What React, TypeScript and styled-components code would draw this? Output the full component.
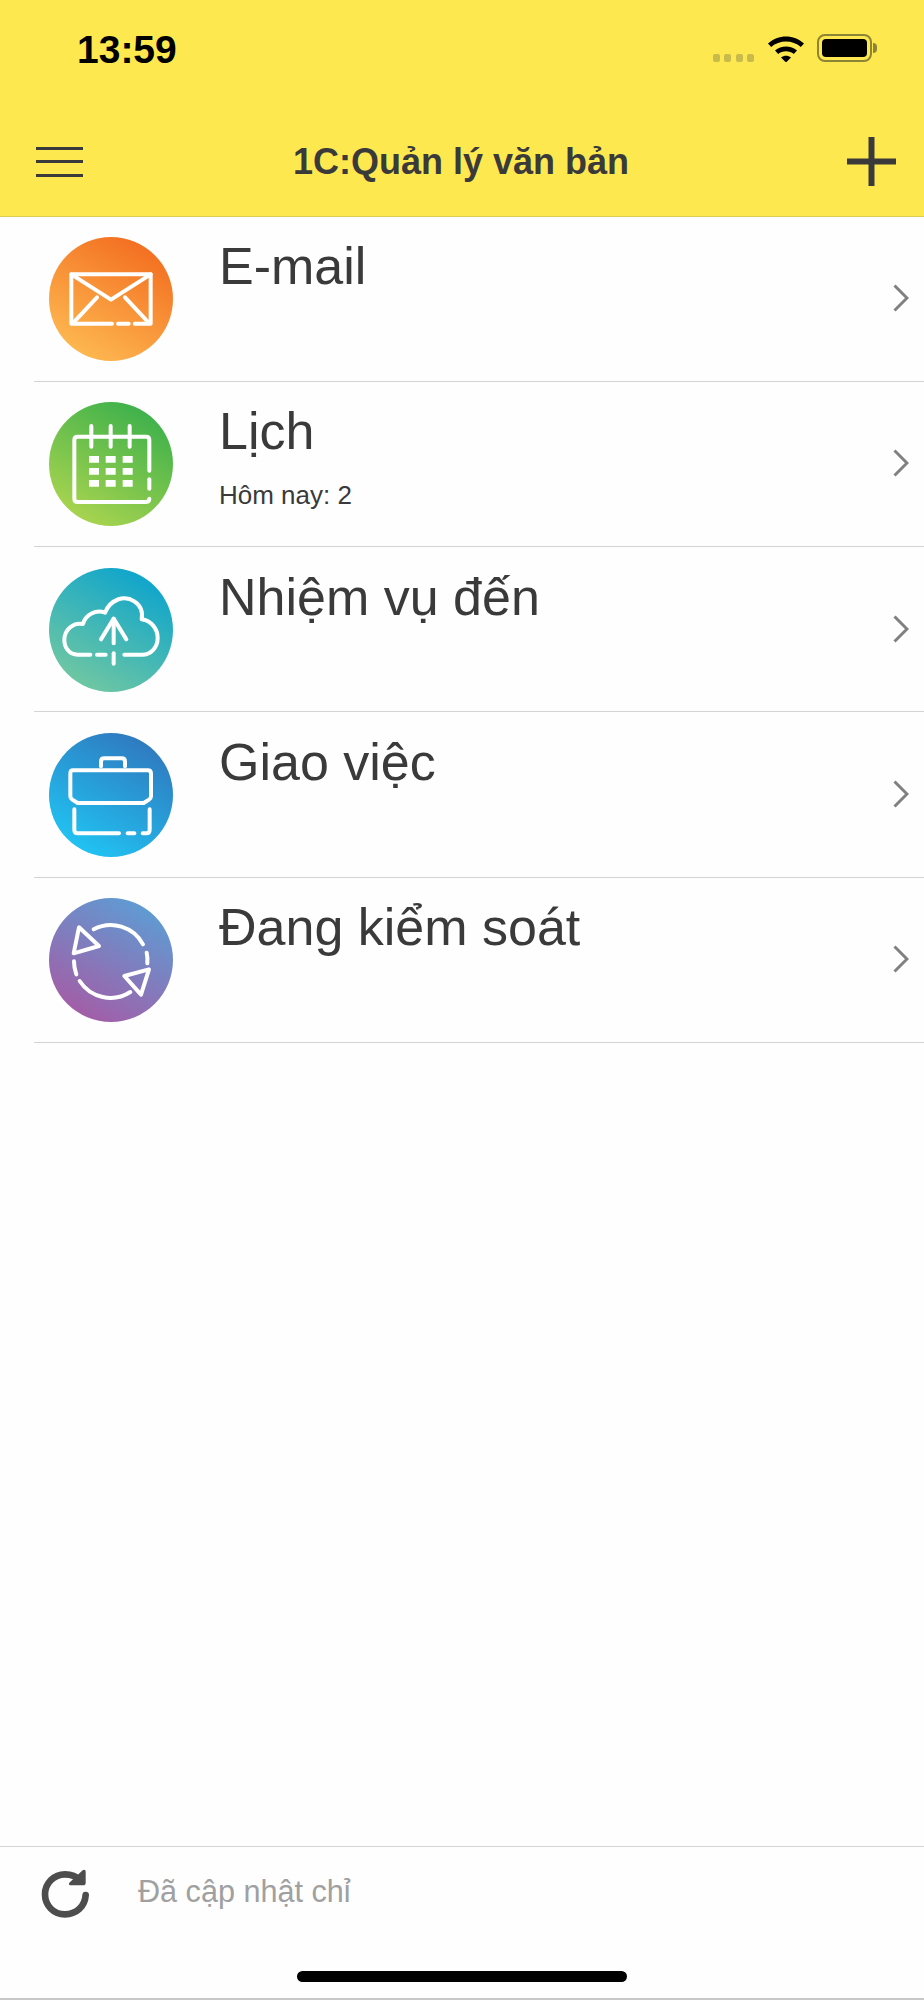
import React from 'react';
import styled, { createGlobalStyle } from 'styled-components';

const GlobalStyle = createGlobalStyle`
  html, body {
    margin: 0;
    padding: 0;
    background: #fff;
  }
  * {
    box-sizing: border-box;
  }
`;

const Screen = styled.div`
  width: 924px;
  height: 2000px;
  display: flex;
  flex-direction: column;
  background: #fefefe;
  font-family: 'Liberation Sans', Arial, sans-serif;
  color: #3a3a3a;
  overflow: hidden;
`;

const Top = styled.header`
  height: 216.5px;
  flex: none;
  display: flex;
  flex-direction: column;
  background: #fee84f;
  border-bottom: 1px solid #d9cd55;
`;

const StatusBar = styled.div`
  height: 100px;
  display: flex;
  justify-content: space-between;
  padding: 27px 52px 0 77px;
`;

const Time = styled.div`
  font-size: 39px;
  line-height: 45px;
  font-weight: 700;
  color: #000;
`;

const StatusIcons = styled.div`
  display: flex;
  align-items: flex-start;
  padding-top: 7px;
`;

const Dots = styled.div`
  display: flex;
  gap: 4.5px;
  margin: 20px 13px 0 0;
`;

const Dot = styled.span`
  width: 7px;
  height: 8px;
  border-radius: 2px;
  background: #c9bb4b;
`;

const Wifi = styled.svg`
  width: 38px;
  height: 28px;
  margin: 0 12px 0 0;
`;

const Battery = styled.div`
  position: relative;
  width: 55px;
  height: 28px;
  padding: 3px;
  border: 2px solid #8d8435;
  border-radius: 8px;
  &::after {
    content: '';
    position: absolute;
    right: -7px;
    top: 7px;
    width: 4px;
    height: 10px;
    border-radius: 0 4px 4px 0;
    background: #8d8435;
  }
`;

const BatteryLevel = styled.div`
  height: 100%;
  border-radius: 4px;
  background: #000;
`;

const NavBar = styled.div`
  height: 115.5px;
  display: flex;
  align-items: center;
  justify-content: space-between;
  padding: 8px 28px 0 36px;
`;

const Burger = styled.div`
  width: 47px;
  height: 30px;
  display: flex;
  flex-direction: column;
  justify-content: space-between;
`;

const BurgerLine = styled.span`
  height: 3px;
  background: #3a3a3a;
`;

const NavTitle = styled.div`
  font-size: 36px;
  line-height: 40px;
  font-weight: 700;
  margin-right: 8px;
`;

const PlusIcon = styled.svg`
  width: 49px;
  height: 49px;
`;

const List = styled.div`
  flex: 1;
  display: flex;
  flex-direction: column;
`;

const Row = styled.div`
  height: 165.3px;
  flex: none;
  display: flex;
  align-items: flex-start;
  margin-left: 34px;
  padding: 20.5px 15px 0 15px;
  border-bottom: 1px solid #d4d4d4;
`;

const Badge = styled.svg`
  width: 124px;
  height: 124px;
  flex: none;
`;

const RowText = styled.div`
  flex: 1;
  margin-left: 46px;
  margin-top: -1px;
`;

const RowTitle = styled.div`
  font-size: 52px;
  line-height: 60px;
`;

const RowSub = styled.div`
  font-size: 26px;
  line-height: 30px;
  margin-top: 19px;
`;

const Chevron = styled.svg`
  width: 16px;
  height: 28px;
  flex: none;
  margin-top: 47px;
`;

const Footer = styled.footer`
  height: 154px;
  flex: none;
  position: relative;
  display: flex;
  align-items: flex-start;
  padding: 13px 0 0 30px;
  border-top: 1px solid #d4d4d4;
  border-bottom: 2px solid #c8c8c8;
`;

const RefreshIcon = styled.svg`
  width: 70px;
  height: 64px;
  flex: none;
`;

const FooterText = styled.div`
  font-size: 30.6px;
  line-height: 36px;
  color: #a0a0a0;
  margin: 13px 0 0 38px;
`;

const HomeBar = styled.div`
  position: absolute;
  left: 297px;
  top: 124px;
  width: 330px;
  height: 11px;
  border-radius: 6px;
  background: #000;
`;

const Line = styled.g`
  fill: none;
  stroke: #fff;
  stroke-width: 12;
  stroke-linecap: round;
  stroke-linejoin: round;
`;

type BadgeProps = { id: string; from: string; to: string; children: React.ReactNode };

// coordinates are the ones read from the 3x crops of the reference
const CircleBadge = ({ id, from, to, children }: BadgeProps) => (
  <Badge viewBox="56 36 372 372">
    <defs>
      <linearGradient id={id} x1="0.8" y1="0.08" x2="0.3" y2="0.95">
        <stop offset="0" stopColor={from} />
        <stop offset="1" stopColor={to} />
      </linearGradient>
    </defs>
    <circle cx="242" cy="222" r="186" fill={`url(#${id})`} />
    <Line>{children}</Line>
  </Badge>
);

const rows = [
  {
    id: 'mail',
    title: 'E-mail',
    from: '#f36f21',
    to: '#fdb64f',
    icon: (
      <>
        <path d="M245 296H123V148H361V296H313" />
        <path d="M263 296H295" />
        <path d="M123 148L242 224L361 148" />
        <path d="M200 217L130 292" />
        <path d="M284 217L354 292" />
      </>
    ),
  },
  {
    id: 'calendar',
    title: 'Lịch',
    sub: 'Hôm nay: 2',
    from: '#3eb14b',
    to: '#a6d34f',
    icon: (
      <>
        <path d="M357 242V150Q357 140 347 140H142Q132 140 132 150V326Q132 336 142 336H345Q357 336 357 326" />
        <path d="M357 268V296" />
        <path d="M183 108V170M241 108V170M298 108V170" />
        <path
          d="M176 198h30v20h-30zM226 198h30v20h-30zM277 198h30v20h-30zM176 234h30v20h-30zM226 234h30v20h-30zM277 234h30v20h-30zM176 270h30v20h-30zM226 270h30v20h-30zM277 270h30v20h-30z"
          fill="#fff"
          stroke="none"
        />
      </>
    ),
  },
  {
    id: 'cloud',
    title: 'Nhiệm vụ đến',
    from: '#0fa5cc',
    to: '#6dc6a3',
    icon: (
      <>
        <path d="M180 296H142C116 296 102 274 102 252C102 222 128 198 158 204C166 176 196 160 224 170C240 130 282 116 312 136C330 148 338 168 334 190C362 194 382 218 382 246C382 274 362 296 336 296H282" />
        <path d="M200 296H226" />
        <path d="M250 188V262" />
        <path d="M250 292V323" />
        <path d="M212 250L250 188L288 250" />
      </>
    ),
  },
  {
    id: 'case',
    title: 'Giao việc',
    from: '#2f7abf',
    to: '#21c1f1',
    icon: (
      <>
        <path d="M212 136V122Q212 112 222 112H274Q284 112 284 122V136" />
        <path d="M128 148H352Q362 148 362 158V226Q362 232 356 236L340 246H142L126 236Q120 232 120 226V158Q120 148 128 148Z" />
        <path d="M132 265V326Q132 337 142 337H266" />
        <path d="M292 337H312" />
        <path d="M337 337H348Q358 337 358 326V265" />
      </>
    ),
  },
  {
    id: 'sync',
    title: 'Đang kiểm soát',
    from: '#5f9bd3',
    to: '#a15fa8',
    icon: (
      <>
        <path d="M190 130A110 110 0 0 1 338 175" />
        <path d="M349 200A110 110 0 0 1 351 232" />
        <path d="M148 285A110 110 0 0 0 300 318" />
        <path d="M131 226A110 110 0 0 0 138 265" />
        <path d="M146 124L130 202L206 180Z" />
        <path d="M356 250L282 270L332 326Z" />
      </>
    ),
  },
];

const App: React.FC = () => (
  <Screen>
    <GlobalStyle />
    <Top>
      <StatusBar>
        <Time>13:59</Time>
        <StatusIcons>
          <Dots>
            <Dot />
            <Dot />
            <Dot />
            <Dot />
          </Dots>
          <Wifi viewBox="0 0 38 28">
            <path d="M1 9.5C11 0 27 0 37 9.5L33.8 13C25.6 5.6 12.4 5.6 4.2 13Z" />
            <path d="M8 16.5C14 11.2 24 11.2 30 16.5L26.8 20C22.6 16.4 15.4 16.4 11.2 20Z" />
            <path d="M14 23.5C17 21.2 21 21.2 24 23.5L19 28.5Z" />
          </Wifi>
          <Battery>
            <BatteryLevel />
          </Battery>
        </StatusIcons>
      </StatusBar>
      <NavBar>
        <Burger>
          <BurgerLine />
          <BurgerLine />
          <BurgerLine />
        </Burger>
        <NavTitle>1C:Quản lý văn bản</NavTitle>
        <PlusIcon viewBox="0 0 49 49">
          <path d="M21.5 0h6v21.5H49v6H27.5V49h-6V27.5H0v-6h21.5z" fill="#3a3a3a" />
        </PlusIcon>
      </NavBar>
    </Top>
    <List>
      {rows.map((row) => (
        <Row key={row.id}>
          <CircleBadge id={row.id} from={row.from} to={row.to}>
            {row.icon}
          </CircleBadge>
          <RowText>
            <RowTitle>{row.title}</RowTitle>
            {row.sub && <RowSub>{row.sub}</RowSub>}
          </RowText>
          <Chevron viewBox="0 0 16 28">
            <path d="M1.5 1.5L14 14L1.5 26.5" fill="none" stroke="#808080" strokeWidth="3" />
          </Chevron>
        </Row>
      ))}
    </List>
    <Footer>
      <RefreshIcon viewBox="0 0 210 192">
        <path
          d="M167 105C165 140 138 163 105 163C70 163 45 136 45 103C45 70 72 43 105 43C124 43 140 50 152 62"
          fill="none"
          stroke="#4d4d4d"
          strokeWidth="20"
          strokeLinecap="round"
        />
        <path d="M118 68L158 31Q167 26 167 36V68Q167 76 159 76H124Q114 76 118 68Z" fill="#4d4d4d" />
      </RefreshIcon>
      <FooterText>Đã cập nhật chỉ</FooterText>
      <HomeBar />
    </Footer>
  </Screen>
);

export default App;
